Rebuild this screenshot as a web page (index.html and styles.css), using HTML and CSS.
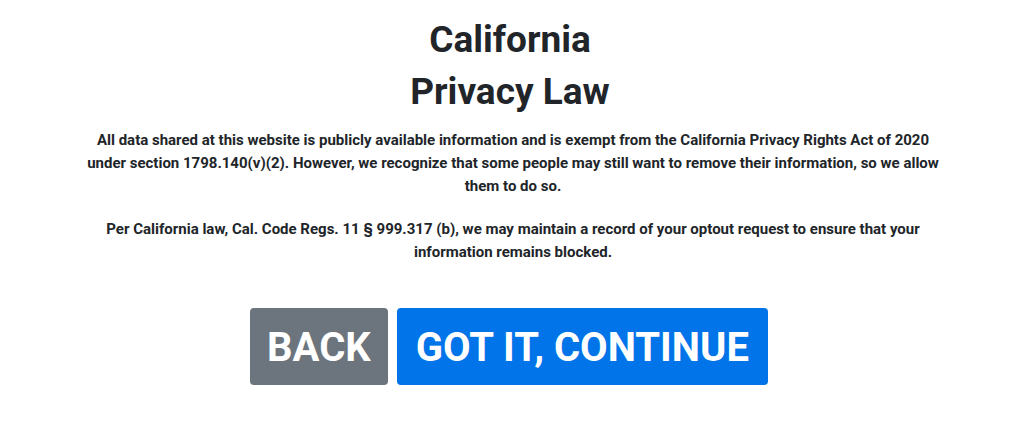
FILE: index.html
```html
<!DOCTYPE html>
<html lang="en">
<head>
<meta charset="utf-8">
<title>California Privacy Law</title>
<link rel="stylesheet" href="styles.css">
</head>
<body>
<main class="notice">
  <h1 class="notice-title">California<br>Privacy Law</h1>
  <p class="notice-text">All data shared at this website is publicly available information and is exempt from the California Privacy Rights Act of 2020 under section 1798.140(v)(2). However, we recognize that some people may still want to remove their information, so we allow them to do so.</p>
  <p class="notice-text">Per California law, Cal. Code Regs. 11 § 999.317 (b), we may maintain a record of your optout request to ensure that your information remains blocked.</p>
  <div class="actions">
    <a class="btn btn-back" href="#">BACK</a>
    <a class="btn btn-continue" href="#">GOT IT, CONTINUE</a>
  </div>
</main>
</body>
</html>
```

FILE: styles.css
```css
html, body {
  margin: 0;
  padding: 0;
  background: #ffffff;
}
body {
  font-family: Roboto, "Liberation Sans", Arial, sans-serif;
  color: #212529;
}
.notice {
  display: flex;
  flex-direction: column;
  align-items: center;
  text-align: center;
  padding-top: 14px;
}
.notice-title {
  margin: 0 0 11px;
  padding-right: 4px;
  font-size: 37px;
  line-height: 52px;
  font-weight: 700;
}
.notice-text {
  margin: 0 0 20px;
  padding-left: 2px;
  max-width: 860px;
  font-size: 15px;
  line-height: 23px;
  font-weight: 700;
}
.actions {
  display: flex;
  gap: 9px;
  margin-top: 24px;
  padding-right: 6px;
}
.btn {
  display: block;
  height: 77px;
  box-sizing: border-box;
  padding: 2px 19px 0;
  line-height: 75px;
  font-size: 40px;
  font-weight: 700;
  color: #ffffff;
  text-decoration: none;
  border-radius: 4px;
}
.btn-back {
  padding-left: 17px;
  padding-right: 17px;
  background: #6c757d;
}
.btn-continue {
  background: #0074e8;
}
```
